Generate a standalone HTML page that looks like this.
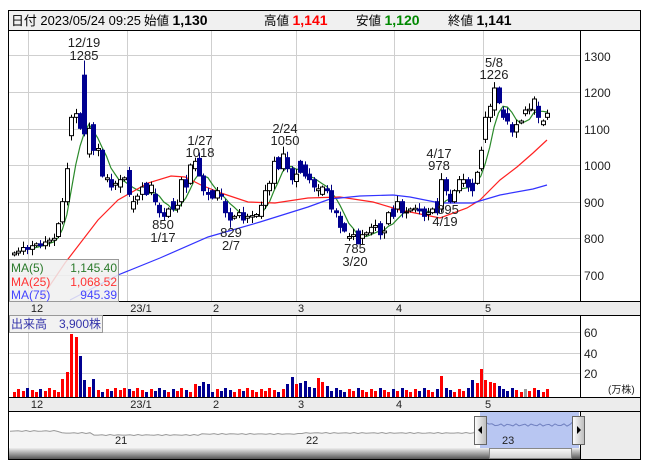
<!DOCTYPE html>
<html><head><meta charset="utf-8">
<style>
html,body{margin:0;padding:0;background:#fff;width:653px;height:470px;overflow:hidden}
svg{display:block;font-family:"Liberation Sans","Noto Sans CJK JP",sans-serif}
</style></head><body>
<svg id="s" width="653" height="470" xmlns="http://www.w3.org/2000/svg">
<rect x="8.5" y="10.5" width="632" height="449" fill="#fff" stroke="#000"/>
<rect x="9" y="11" width="631" height="19" fill="#f0f0f0"/>
<line x1="8" y1="30.5" x2="641" y2="30.5" stroke="#000"/>
<g id="grid" stroke="#cfcfcf" stroke-width="1"></g>
<g id="ma"></g>
<g id="cd"></g>
<g id="vol"></g>
<line x1="580.5" y1="30" x2="580.5" y2="301" stroke="#000"/>
<rect x="9" y="301" width="631" height="14" fill="#ececec"/>
<line x1="8" y1="301.5" x2="641" y2="301.5" stroke="#000"/>
<line x1="8" y1="315.5" x2="641" y2="315.5" stroke="#000"/>
<line x1="580.5" y1="315" x2="580.5" y2="397" stroke="#000"/>
<rect x="9" y="397" width="631" height="14" fill="#ececec"/>
<line x1="8" y1="397.5" x2="641" y2="397.5" stroke="#000"/>
<line x1="8" y1="411.5" x2="641" y2="411.5" stroke="#000"/>
<rect x="581" y="412" width="59" height="47" fill="#ececec"/>
<line x1="580.5" y1="411" x2="580.5" y2="459" stroke="#000"/>
<g font-size="12.5" fill="#000">
<text x="11" y="25" textLength="130" lengthAdjust="spacingAndGlyphs">日付 2023/05/24 09:25</text>
<text x="144" y="25">始値 <tspan font-weight="bold" font-size="14">1,130</tspan></text>
<text x="264" y="25">高値 <tspan font-weight="bold" font-size="14" fill="#f00">1,141</tspan></text>
<text x="356" y="25">安値 <tspan font-weight="bold" font-size="14" fill="#080">1,120</tspan></text>
<text x="448" y="25">終値 <tspan font-weight="bold" font-size="14">1,141</tspan></text>
</g>
<g font-size="12" fill="#222">
<text x="584" y="61">1300</text><text x="584" y="97">1200</text><text x="584" y="134">1100</text>
<text x="584" y="170">1000</text><text x="584" y="207">900</text><text x="584" y="243">800</text><text x="584" y="280">700</text>
<text x="584" y="337">60</text><text x="584" y="358">40</text><text x="584" y="378">20</text>
<text x="608" y="393" font-size="10">(万株)</text>
</g>
<g font-size="11" fill="#222" text-anchor="middle">
<text x="37" y="312">12</text><text x="141" y="312">23/1</text><text x="216" y="312">2</text><text x="301" y="312">3</text><text x="399" y="312">4</text><text x="488" y="312">5</text>
<text x="37" y="408">12</text><text x="141" y="408">23/1</text><text x="216" y="408">2</text><text x="301" y="408">3</text><text x="399" y="408">4</text><text x="488" y="408">5</text>
</g>
<g font-size="13" fill="#222" text-anchor="middle">
<text x="84" y="47">12/19</text><text x="84" y="60">1285</text>
<text x="200" y="145">1/27</text><text x="200" y="157">1018</text>
<text x="285" y="133">2/24</text><text x="285" y="145">1050</text>
<text x="163" y="229">850</text><text x="163" y="242">1/17</text>
<text x="231" y="237">829</text><text x="231" y="250">2/7</text>
<text x="355" y="253">785</text><text x="355" y="266">3/20</text>
<text x="439" y="158">4/17</text><text x="439" y="170">978</text>
<text x="448" y="214">895</text><text x="445" y="226">4/19</text>
<text x="494" y="67">5/8</text><text x="494" y="79">1226</text>
</g>
<rect x="9.5" y="259.5" width="109" height="42" fill="rgba(240,240,240,0.85)" stroke="#999"/>
<g font-size="12">
<text x="11" y="272" fill="#2a7a2a">MA(5)</text><text x="117" y="272" fill="#2a7a2a" text-anchor="end">1,145.40</text>
<text x="11" y="286" fill="#f33">MA(25)</text><text x="117" y="286" fill="#f33" text-anchor="end">1,068.52</text>
<text x="11" y="299" fill="#44f">MA(75)</text><text x="117" y="299" fill="#44f" text-anchor="end">945.39</text>
</g>
<rect x="9.5" y="315.5" width="93" height="17" fill="rgba(240,240,240,0.85)" stroke="#999"/>
<text x="11" y="328" font-size="12" fill="#33a">出来高　3,900株</text>
<g id="nav"></g>
<rect x="480" y="412" width="99" height="36" fill="#b8c6f2"/>
<polyline id="navb" fill="none" stroke="#7080c0" stroke-width="1"/>
<text x="115" y="444" font-size="11" fill="#222">21</text>
<text x="306" y="444" font-size="11" fill="#222">22</text>
<text x="502" y="444" font-size="11" fill="#222">23</text>
<defs><linearGradient id="sb" x1="0" y1="0" x2="0" y2="1"><stop offset="0" stop-color="#eee"/><stop offset="1" stop-color="#555"/></linearGradient>
<linearGradient id="th" x1="0" y1="0" x2="0" y2="1"><stop offset="0" stop-color="#fafafa"/><stop offset="1" stop-color="#ccc"/></linearGradient>
<linearGradient id="hd" x1="0" y1="0" x2="1" y2="0"><stop offset="0" stop-color="#fff"/><stop offset="1" stop-color="#bbb"/></linearGradient></defs>
<rect x="9" y="448" width="571" height="11" fill="url(#sb)"/>
<rect x="489.5" y="448.5" width="82" height="10" fill="url(#th)" stroke="#888"/>
<rect x="474.5" y="416.5" width="12" height="28" fill="url(#hd)" stroke="#666"/>
<polygon points="478,430 482,426 482,434" fill="#000"/>
<rect x="572.5" y="416.5" width="12" height="28" fill="url(#hd)" stroke="#666"/>
<polygon points="581,430 577,426 577,434" fill="#000"/>
</svg>
<script>
var NS="http://www.w3.org/2000/svg";
function el(p,t,a){var e=document.createElementNS(NS,t);for(var k in a)e.setAttribute(k,a[k]);document.getElementById(p).appendChild(e);return e;}
[55,92,129,165,202,238,275].forEach(function(y){el("grid","line",{x1:9,x2:580,y1:y+.5,y2:y+.5});});
[332,353,373].forEach(function(y){el("grid","line",{x1:9,x2:580,y1:y+.5,y2:y+.5});});
[28,127,211,296,394,483].forEach(function(x){el("grid","line",{x1:x+.5,x2:x+.5,y1:31,y2:301});el("grid","line",{x1:x+.5,x2:x+.5,y1:316,y2:397});});
var D=[[755,760],[760,765],[765,775],[775,770],[770,780],[780,785],[785,780],[780,790],[790,795],[795,800],
[805,840],[845,900],[900,990],[1080,1130],[1130,1140],[1140,1100],[1245,1085],[1030,1100],[1110,1040],[1040,1045],
[1040,970],[960,965],[960,940],[945,950],[940,960],[960,965],[985,920],[880,900],[905,915],[920,940],
[950,920],[925,945],[920,900],[890,870],[870,860],[860,880],[900,880],[880,890],[900,960],[960,940],
[950,1000],[990,1010],[1018,970],[970,930],[925,920],[930,910],[910,930],[920,915],[900,870],[870,850],
[855,860],[862,870],[870,850],[855,860],[858,862],[860,865],[860,890],[890,930],[930,950],[950,1010],
[1020,990],[990,1030],[1020,990],[990,960],[955,975],[1010,980],[1000,970],[975,960],[960,940],[930,935],
[920,940],[935,930],[930,880],[875,870],[860,830],[840,820],[800,805],[805,810],[820,785],[800,810],
[810,815],[815,830],[830,835],[840,810],[815,820],[840,870],[880,860],[880,900],[900,870],[870,872],
[875,880],[878,882],[880,875],[880,860],[865,870],[870,880],[900,870],[880,960],[960,930],[920,900],
[900,930],[930,960],[950,960],[960,940],[950,930],[950,980],[990,1040],[1070,1130],[1130,1160],[1150,1210],
[1210,1170],[1150,1130],[1140,1120],[1110,1090],[1090,1110],[1115,1120],[1140,1150],[1148,1152],[1150,1180],[1160,1130],
[1110,1120],[1130,1141]];
var n=D.length,x0=14,x1=547,dx=(x1-x0)/(n-1);
function Y(p){return 55+(1300-p)*0.3667;}
var hi={16:1285,42:1018,61:1050,97:978,109:1226,34:850,49:829,78:785,99:895};
var cl=[];
D.forEach(function(d,i){
 var x=x0+i*dx,o=d[0],c=d[1];cl.push(c);
 var h=Math.max(o,c)+((i*7)%5)*3+4,l=Math.min(o,c)-((i*11)%5)*3-4;
 if(hi[i]){ if(hi[i]>Math.max(o,c))h=hi[i]; else l=hi[i]; }
 var cx=Math.round(x)+.5;
 el("cd","line",{x1:cx,x2:cx,y1:Y(h),y2:Y(l),stroke:c>=o?"#000":"#000080"});
 var t=Y(Math.max(o,c)),b=Y(Math.min(o,c));if(b-t<1)b=t+1;
 if(c>=o) el("cd","rect",{x:cx-2,y:t,width:4,height:b-t,fill:"#fff",stroke:"#000","stroke-width":1});
 else el("cd","rect",{x:cx-2.5,y:t-.5,width:5,height:b-t+1,fill:"#000090"});
});
var pts=[];for(var i=4;i<n;i++){var s=0;for(var j=0;j<5;j++)s+=cl[i-j];pts.push((x0+i*dx).toFixed(1)+","+Y(s/5).toFixed(1));}
el("ma","polyline",{points:pts.join(" "),fill:"none",stroke:"#2a8a2a","stroke-width":1.2});
el("ma","polyline",{points:"40,300 65,263 98,220 118,200 148,183 171,176 185,177 201,185 221,193 248,202 275,203 308,198 340,197 373,202 400,210 440,218 467,208 480,200 500,180 517,167 533,153 547,140",fill:"none",stroke:"#f22","stroke-width":1.2});
el("ma","polyline",{points:"70,300 118,275 160,258 208,237 260,222 308,207 330,199 360,196 393,195 410,197 440,203 473,203 500,195 533,189 547,185",fill:"none",stroke:"#33f","stroke-width":1.2});
var V={11:18,12:25,13:63,14:60,15:41,16:17,17:10,18:18,19:7,25:9,41:13,42:11,43:15,44:13,62:13,63:20,64:13,65:14,66:16,67:10,69:19,70:15,71:11,97:21,98:9,101:8,104:17,105:14,106:28,107:17,108:15,109:14,110:11};
D.forEach(function(d,i){
 var v=V[i]||(5+((i*13)%5));var x=Math.round(x0+i*dx)-1;
 var col=d[1]>=d[0]?"#f00":"#000090";if(i==116)col="#999";
 el("vol","rect",{x:x,y:397-v,width:3,height:v,fill:col});
});
var np=[];for(var x=10;x<=476;x+=4){var y=433+Math.sin(x*0.9)*0.5+(x<60?-2:0)+(x>90&&x<200?2:0)+(x>200&&x<300?1:0);np.push(x+","+y.toFixed(1));}
np.push("476,427");
el("nav","polygon",{points:"10,448 "+np.join(" ")+" 476,448",fill:"#f4f4f4"});
el("nav","polyline",{points:np.join(" "),fill:"none",stroke:"#999"});
var bp=[];for(var x=480;x<=579;x+=3){bp.push(x+","+(425+Math.sin(x*1.3)*1.2+(x<490?-2:0)+(x>570?-3:0)).toFixed(1));}
document.getElementById("navb").setAttribute("points",bp.join(" "));
</script>
</body></html>
